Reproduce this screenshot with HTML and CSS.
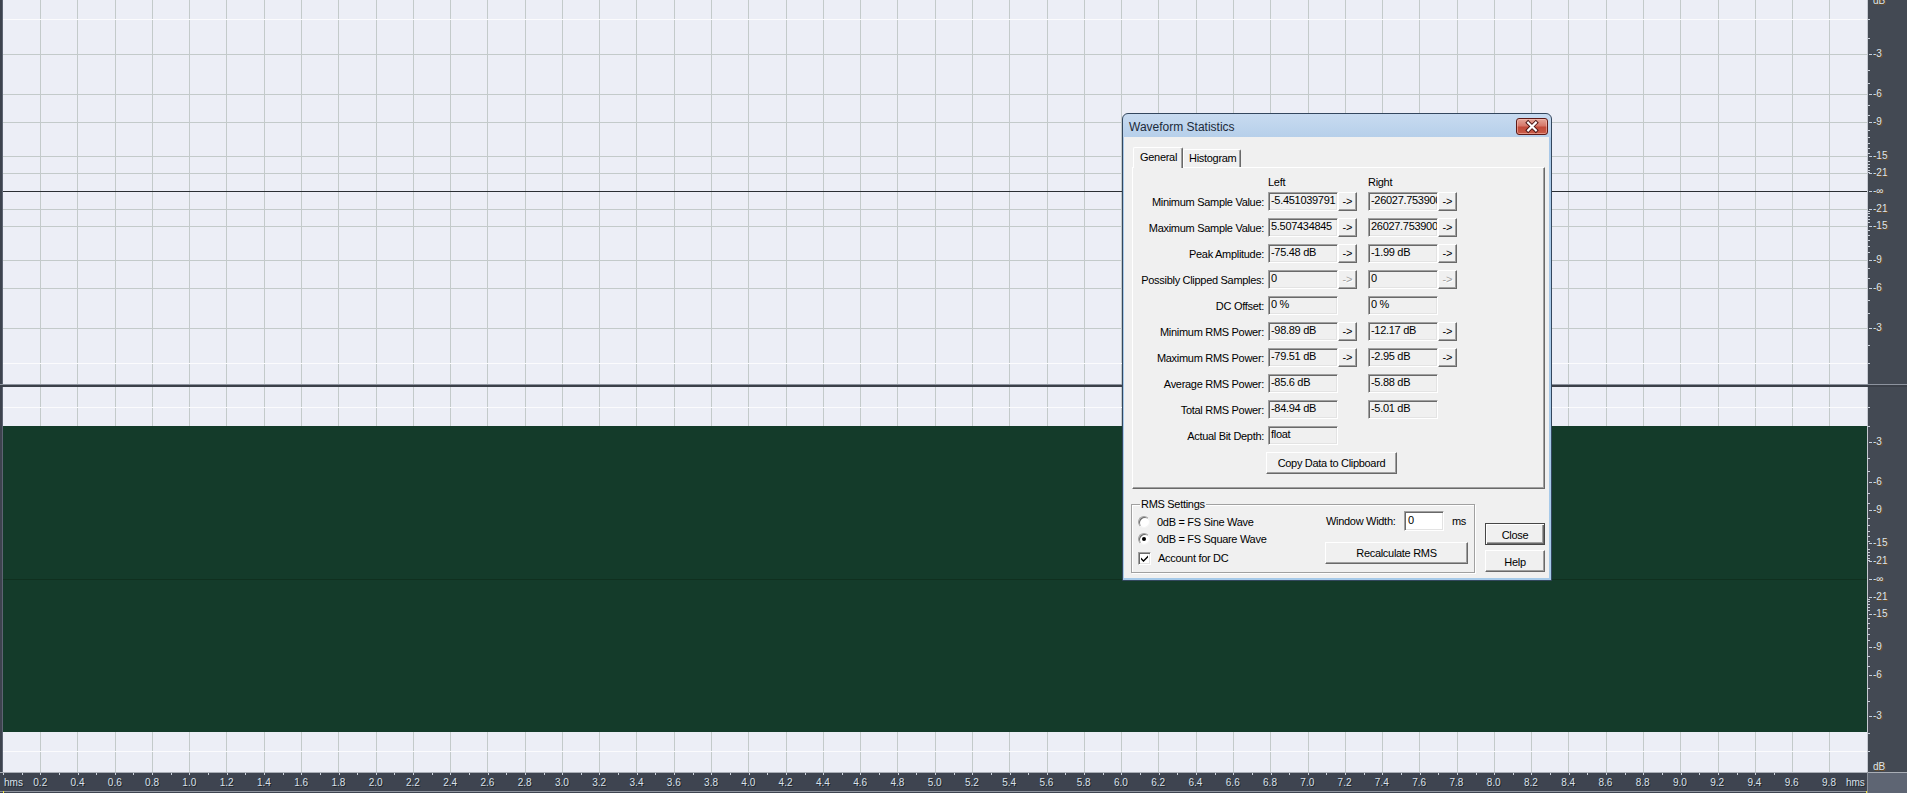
FILE: index.html
```html
<!DOCTYPE html>
<html>
<head>
<meta charset="utf-8">
<title>Waveform Statistics</title>
<link rel="stylesheet" href="styles.css">
</head>
<body>
<div class="app">
  <div class="track t1">
    <div class="strip"></div>
    <div class="canvas">
      <svg class="grid" width="1864" height="384" shape-rendering="crispEdges">
        <path class="gl" d="M37.5 0V384m37.28 -384v384m37.28 -384v384m37.28 -384v384m37.28 -384v384m37.28 -384v384m37.28 -384v384m37.28 -384v384m37.28 -384v384m37.28 -384v384m37.28 -384v384m37.28 -384v384m37.28 -384v384m37.28 -384v384m37.28 -384v384m37.28 -384v384m37.28 -384v384m37.28 -384v384m37.28 -384v384m37.28 -384v384m37.28 -384v384m37.28 -384v384m37.28 -384v384m37.28 -384v384m37.28 -384v384m37.28 -384v384m37.28 -384v384m37.28 -384v384m37.28 -384v384m37.28 -384v384m37.28 -384v384m37.28 -384v384m37.28 -384v384m37.28 -384v384m37.28 -384v384m37.28 -384v384m37.28 -384v384m37.28 -384v384m37.28 -384v384m37.28 -384v384m37.28 -384v384m37.28 -384v384m37.28 -384v384m37.28 -384v384m37.28 -384v384m37.28 -384v384m37.28 -384v384m37.28 -384v384m37.28 -384v384"/>
        <path class="gl" d="M0 54.5H1864M0 94.5H1864M0 122.5H1864M0 156.5H1864M0 173.5H1864M0 209.5H1864M0 226.5H1864M0 260.5H1864M0 288.5H1864M0 328.5H1864"/>
        <path class="wl" d="M0 19.5H1864M0 363.5H1864"/>
        <path class="cl" d="M0 191.5H1864"/>
      </svg>
    </div>
    <div class="vsep"></div>
    <div class="ruler">
      <svg class="ticks" width="39" height="384" shape-rendering="crispEdges">
        <path d="M0 19.5h2M0 38.5h2M0 70.5h2M0 83.5h2M0 105.5h2M0 115.5h2M0 130.5h2M0 137.5h2M0 143.5h2M0 148.5h2M0 153.5h2M0 161.5h2M0 164.5h2M0 167.5h2M0 170.5h2M0 172.5h2M0 363.5h2M0 345.5h2M0 313.5h2M0 300.5h2M0 278.5h2M0 268.5h2M0 252.5h2M0 246.5h2M0 240.5h2M0 235.5h2M0 230.5h2M0 222.5h2M0 219.5h2M0 216.5h2M0 213.5h2M0 211.5h2"/>
        <path d="M1 54.5h3M1 94.5h3M1 122.5h3M1 156.5h3M1 173.5h3M1 191.5h3M1 209.5h3M1 226.5h3M1 260.5h3M1 288.5h3M1 328.5h3"/>
      </svg>
      <span class="rl" style="top:-4px">dB</span>
      <span class="rl" style="top:49px">-3</span>
      <span class="rl" style="top:89px">-6</span>
      <span class="rl" style="top:117px">-9</span>
      <span class="rl" style="top:151px">-15</span>
      <span class="rl" style="top:168px">-21</span>
      <span class="rl" style="top:186px">-∞</span>
      <span class="rl" style="top:204px">-21</span>
      <span class="rl" style="top:221px">-15</span>
      <span class="rl" style="top:255px">-9</span>
      <span class="rl" style="top:283px">-6</span>
      <span class="rl" style="top:323px">-3</span>
    </div>
  </div>

  <div class="tsep"></div>

  <div class="track t2">
    <div class="strip"></div>
    <div class="canvas">
      <svg class="grid" width="1864" height="385" shape-rendering="crispEdges">
        <path class="gl" d="M37.5 0V385m37.28 -385v385m37.28 -385v385m37.28 -385v385m37.28 -385v385m37.28 -385v385m37.28 -385v385m37.28 -385v385m37.28 -385v385m37.28 -385v385m37.28 -385v385m37.28 -385v385m37.28 -385v385m37.28 -385v385m37.28 -385v385m37.28 -385v385m37.28 -385v385m37.28 -385v385m37.28 -385v385m37.28 -385v385m37.28 -385v385m37.28 -385v385m37.28 -385v385m37.28 -385v385m37.28 -385v385m37.28 -385v385m37.28 -385v385m37.28 -385v385m37.28 -385v385m37.28 -385v385m37.28 -385v385m37.28 -385v385m37.28 -385v385m37.28 -385v385m37.28 -385v385m37.28 -385v385m37.28 -385v385m37.28 -385v385m37.28 -385v385m37.28 -385v385m37.28 -385v385m37.28 -385v385m37.28 -385v385m37.28 -385v385m37.28 -385v385m37.28 -385v385m37.28 -385v385m37.28 -385v385m37.28 -385v385"/>
        <path class="wl" d="M0 20.5H1864M0 364.5H1864"/>
        <rect class="wave" x="0" y="39" width="1864" height="306"/>
        <path class="wc" d="M0 192.5H1864"/>
      </svg>
    </div>
    <div class="vsep"></div>
    <div class="ruler">
      <svg class="ticks" width="39" height="385" shape-rendering="crispEdges">
        <g transform="translate(0 1)">
          <path d="M0 19.5h2M0 38.5h2M0 70.5h2M0 83.5h2M0 105.5h2M0 115.5h2M0 130.5h2M0 137.5h2M0 143.5h2M0 148.5h2M0 153.5h2M0 161.5h2M0 164.5h2M0 167.5h2M0 170.5h2M0 172.5h2M0 363.5h2M0 345.5h2M0 313.5h2M0 300.5h2M0 278.5h2M0 268.5h2M0 252.5h2M0 246.5h2M0 240.5h2M0 235.5h2M0 230.5h2M0 222.5h2M0 219.5h2M0 216.5h2M0 213.5h2M0 211.5h2"/>
          <path d="M1 54.5h3M1 94.5h3M1 122.5h3M1 155.5h3M1 173.5h3M1 191.5h3M1 209.5h3M1 226.5h3M1 259.5h3M1 287.5h3M1 328.5h3"/>
        </g>
      </svg>
      <span class="rl" style="top:50px">-3</span>
      <span class="rl" style="top:90px">-6</span>
      <span class="rl" style="top:118px">-9</span>
      <span class="rl" style="top:151px">-15</span>
      <span class="rl" style="top:169px">-21</span>
      <span class="rl" style="top:187px">-∞</span>
      <span class="rl" style="top:205px">-21</span>
      <span class="rl" style="top:222px">-15</span>
      <span class="rl" style="top:255px">-9</span>
      <span class="rl" style="top:283px">-6</span>
      <span class="rl" style="top:324px">-3</span>
      <span class="rl" style="top:375px">dB</span>
    </div>
  </div>

  <div class="timebar">
    <div class="timeline">
      <svg class="tticks" width="1867" height="3" shape-rendering="crispEdges">
        <path d="M3.5 0v2m18.64 -2v2m18.64 -2v2m18.64 -2v2m18.64 -2v2m18.64 -2v2m18.64 -2v2m18.64 -2v2m18.64 -2v2m18.64 -2v2m18.64 -2v2m18.64 -2v2m18.64 -2v2m18.64 -2v2m18.64 -2v2m18.64 -2v2m18.64 -2v2m18.64 -2v2m18.64 -2v2m18.64 -2v2m18.64 -2v2m18.64 -2v2m18.64 -2v2m18.64 -2v2m18.64 -2v2m18.64 -2v2m18.64 -2v2m18.64 -2v2m18.64 -2v2m18.64 -2v2m18.64 -2v2m18.64 -2v2m18.64 -2v2m18.64 -2v2m18.64 -2v2m18.64 -2v2m18.64 -2v2m18.64 -2v2m18.64 -2v2m18.64 -2v2m18.64 -2v2m18.64 -2v2m18.64 -2v2m18.64 -2v2m18.64 -2v2m18.64 -2v2m18.64 -2v2m18.64 -2v2m18.64 -2v2m18.64 -2v2m18.64 -2v2m18.64 -2v2m18.64 -2v2m18.64 -2v2m18.64 -2v2m18.64 -2v2m18.64 -2v2m18.64 -2v2m18.64 -2v2m18.64 -2v2m18.64 -2v2m18.64 -2v2m18.64 -2v2m18.64 -2v2m18.64 -2v2m18.64 -2v2m18.64 -2v2m18.64 -2v2m18.64 -2v2m18.64 -2v2m18.64 -2v2m18.64 -2v2m18.64 -2v2m18.64 -2v2m18.64 -2v2m18.64 -2v2m18.64 -2v2m18.64 -2v2m18.64 -2v2m18.64 -2v2m18.64 -2v2m18.64 -2v2m18.64 -2v2m18.64 -2v2m18.64 -2v2m18.64 -2v2m18.64 -2v2m18.64 -2v2m18.64 -2v2m18.64 -2v2m18.64 -2v2m18.64 -2v2m18.64 -2v2m18.64 -2v2m18.64 -2v2m18.64 -2v2"/>
      </svg>
      <div class="tlabels">
        <span class="hms">hms</span>
        <span class="tl">0.2</span><span class="tl">0.4</span><span class="tl">0.6</span><span class="tl">0.8</span><span class="tl">1.0</span>
        <span class="tl">1.2</span><span class="tl">1.4</span><span class="tl">1.6</span><span class="tl">1.8</span><span class="tl">2.0</span>
        <span class="tl">2.2</span><span class="tl">2.4</span><span class="tl">2.6</span><span class="tl">2.8</span><span class="tl">3.0</span>
        <span class="tl">3.2</span><span class="tl">3.4</span><span class="tl">3.6</span><span class="tl">3.8</span><span class="tl">4.0</span>
        <span class="tl">4.2</span><span class="tl">4.4</span><span class="tl">4.6</span><span class="tl">4.8</span><span class="tl">5.0</span>
        <span class="tl">5.2</span><span class="tl">5.4</span><span class="tl">5.6</span><span class="tl">5.8</span><span class="tl">6.0</span>
        <span class="tl">6.2</span><span class="tl">6.4</span><span class="tl">6.6</span><span class="tl">6.8</span><span class="tl">7.0</span>
        <span class="tl">7.2</span><span class="tl">7.4</span><span class="tl">7.6</span><span class="tl">7.8</span><span class="tl">8.0</span>
        <span class="tl">8.2</span><span class="tl">8.4</span><span class="tl">8.6</span><span class="tl">8.8</span><span class="tl">9.0</span>
        <span class="tl">9.2</span><span class="tl">9.4</span><span class="tl">9.6</span><span class="tl">9.8</span>
        <span class="hms hms-r">hms</span>
      </div>
      <span class="mark mark-l"></span>
      <span class="mark mark-r"></span>
    </div>
    <div class="corner"></div>
  </div>
</div>

<div class="dialog">
  <div class="titlebar">
    <span class="title">Waveform Statistics</span>
    <span class="xbtn">
      <svg width="31" height="17" viewBox="0 0 31 17">
        <path d="M11.5 4.5L19.5 12.5M19.5 4.5L11.5 12.5" stroke="#4a1414" stroke-width="4.2" stroke-linecap="square" fill="none"/>
        <path d="M11.5 4.5L19.5 12.5M19.5 4.5L11.5 12.5" stroke="#ffffff" stroke-width="2.2" stroke-linecap="square" fill="none"/>
      </svg>
    </span>
  </div>
  <div class="client">
    <div class="tabs">
      <div class="tab active">General</div>
      <div class="tab">Histogram</div>
    </div>
    <div class="panel">
      <div class="colheads">
        <span class="ch ch-l">Left</span>
        <span class="ch">Right</span>
      </div>
      <div class="row">
        <span class="lbl">Minimum Sample Value:</span>
        <span class="cell cl-l"><span class="field">-5.451039791</span><span class="arr">-&gt;</span></span>
        <span class="cell"><span class="field">-26027.753900</span><span class="arr">-&gt;</span></span>
      </div>
      <div class="row">
        <span class="lbl">Maximum Sample Value:</span>
        <span class="cell cl-l"><span class="field">5.507434845</span><span class="arr">-&gt;</span></span>
        <span class="cell"><span class="field">26027.753900</span><span class="arr">-&gt;</span></span>
      </div>
      <div class="row">
        <span class="lbl">Peak Amplitude:</span>
        <span class="cell cl-l"><span class="field">-75.48 dB</span><span class="arr">-&gt;</span></span>
        <span class="cell"><span class="field">-1.99 dB</span><span class="arr">-&gt;</span></span>
      </div>
      <div class="row">
        <span class="lbl">Possibly Clipped Samples:</span>
        <span class="cell cl-l"><span class="field">0</span><span class="arr disabled">-&gt;</span></span>
        <span class="cell"><span class="field">0</span><span class="arr disabled">-&gt;</span></span>
      </div>
      <div class="row">
        <span class="lbl">DC Offset:</span>
        <span class="cell cl-l"><span class="field">0 %</span></span>
        <span class="cell"><span class="field">0 %</span></span>
      </div>
      <div class="row">
        <span class="lbl">Minimum RMS Power:</span>
        <span class="cell cl-l"><span class="field">-98.89 dB</span><span class="arr">-&gt;</span></span>
        <span class="cell"><span class="field">-12.17 dB</span><span class="arr">-&gt;</span></span>
      </div>
      <div class="row">
        <span class="lbl">Maximum RMS Power:</span>
        <span class="cell cl-l"><span class="field">-79.51 dB</span><span class="arr">-&gt;</span></span>
        <span class="cell"><span class="field">-2.95 dB</span><span class="arr">-&gt;</span></span>
      </div>
      <div class="row">
        <span class="lbl">Average RMS Power:</span>
        <span class="cell cl-l"><span class="field">-85.6 dB</span></span>
        <span class="cell"><span class="field">-5.88 dB</span></span>
      </div>
      <div class="row">
        <span class="lbl">Total RMS Power:</span>
        <span class="cell cl-l"><span class="field">-84.94 dB</span></span>
        <span class="cell"><span class="field">-5.01 dB</span></span>
      </div>
      <div class="row">
        <span class="lbl">Actual Bit Depth:</span>
        <span class="cell cl-l"><span class="field">float</span></span>
      </div>
      <div class="copyrow">
        <span class="btn copy">Copy Data to Clipboard</span>
      </div>
    </div>
    <div class="lower">
      <fieldset class="group">
        <legend>RMS Settings</legend>
        <div class="gbody">
          <div class="gleft">
            <div class="opt"><span class="radio"></span><span>0dB = FS Sine Wave</span></div>
            <div class="opt"><span class="radio on"></span><span>0dB = FS Square Wave</span></div>
            <div class="opt chkrow"><span class="check"><svg width="9" height="9" viewBox="0 0 9 9"><path d="M1 3.5L3.5 6L8 1.5V3.5L3.5 8L1 5.5Z" fill="#000"/></svg></span><span>Account for DC</span></div>
          </div>
          <div class="gright">
            <div class="wwrow">
              <span class="wwl">Window Width:</span>
              <span class="input">0</span>
              <span class="ms">ms</span>
            </div>
            <span class="btn recalc">Recalculate RMS</span>
          </div>
        </div>
      </fieldset>
      <div class="sidebtns">
        <span class="btn side default">Close</span>
        <span class="btn side">Help</span>
      </div>
    </div>
  </div>
</div>
</body>
</html>
```

FILE: styles.css
```css
* { box-sizing: border-box; }
html, body { margin: 0; padding: 0; }
body {
  width: 1907px;
  height: 793px;
  overflow: hidden;
  position: relative;
  background: #3e4450;
  font-family: "Liberation Sans", Arial, sans-serif;
}
.app {
  display: flex;
  flex-direction: column;
  width: 1907px;
  height: 793px;
}

/* tracks */
.track { display: flex; height: 384px; }
.track.t2 { height: 385px; }
.strip {
  width: 3px;
  background: linear-gradient(to right, #3d434e 0 2px, #5d6472 2px);
}
.canvas { width: 1864px; background: #eceef6; overflow: hidden; }
.grid { display: block; }
.gl { stroke: #c3caca; stroke-width: 1; fill: none; }
.wl { stroke: #fbfbfd; stroke-width: 1; fill: none; }
.cl { stroke: #2b2f34; stroke-width: 1; fill: none; }
.wave { fill: #143b2a; }
.wc { stroke: #10301f; stroke-width: 1; fill: none; }
.vsep { width: 1px; background: #c6cad2; }
.ruler {
  width: 39px;
  background: #434953;
  position: relative;
  overflow: hidden;
}
.ticks { position: absolute; left: 0; top: 0; }
.ticks path { stroke: #c9cfd9; stroke-width: 1; fill: none; }
.rl {
  position: absolute;
  left: 5px;
  font-size: 10px;
  line-height: 10px;
  color: #dde4ee;
  text-shadow: 1px 1px 0 #6a4d26;
  white-space: nowrap;
}
.tsep {
  height: 3px;
  background: linear-gradient(to bottom, #8d939e 0 1px, #3b4049 1px);
}

/* time ruler */
.timebar { display: flex; height: 21px; }
.timeline {
  width: 1867px;
  position: relative;
  background: linear-gradient(to bottom, #a9aeb6 0 1px, #3e4450 1px calc(100% - 2px), #8e949e calc(100% - 2px) calc(100% - 1px), #3e4450 calc(100% - 1px));
}
.tticks { position: absolute; left: 0; top: 1px; }
.tticks path { stroke: #c9cfd9; stroke-width: 1; fill: none; }
.tlabels {
  display: flex;
  padding-left: 4px;
  padding-top: 5px;
  font-size: 10px;
  line-height: 12px;
  color: #d9e0ea;
  text-shadow: 1px 1px 0 #20242a;
  white-space: nowrap;
}
.hms { width: 17.64px; flex: 0 0 17.64px; }
.hms-r { margin-left: -1.7px; }
.tl { flex: 0 0 37.28px; width: 37.28px; text-align: center; }
.mark {
  position: absolute;
  bottom: 0;
  width: 1px;
  height: 2px;
  background: #f2e23a;
}
.mark-l { left: 3px; }
.mark-r { left: 1866px; }
.corner {
  width: 40px;
  background: linear-gradient(to bottom, #a9aeb6 0 1px, #5e6573 1px);
  border-left: 1px solid #8a909a;
}

/* dialog */
.dialog {
  position: absolute;
  left: 1122px;
  top: 113px;
  width: 430px;
  height: 468px;
  border: 1px solid #33475e;
  border-radius: 6px 6px 0 0;
  padding: 0 2px 2px 1px;
  background: linear-gradient(to bottom, #c8dbf0 0, #b6cfea 23px, #a8c8e8 24px, #a6cae9 100%);
  display: flex;
  flex-direction: column;
  font-family: "Liberation Sans", Arial, sans-serif;
  font-size: 11px;
  color: #000;
  letter-spacing: -0.3px;
}
.titlebar {
  height: 23px;
  display: flex;
  align-items: flex-start;
  justify-content: space-between;
  padding-left: 5px;
}
.title {
  font-size: 12px;
  line-height: 14px;
  padding-top: 6px;
  color: #1c2a3a;
  letter-spacing: 0;
}
.xbtn {
  margin-top: 4px;
  margin-right: 1px;
  width: 32px;
  height: 17px;
  border: 1px solid #5e1a16;
  border-radius: 3px;
  background: linear-gradient(to bottom, #e4a699 0%, #d6786a 45%, #c24a3a 55%, #c85c48 100%);
  box-shadow: inset 0 0 0 1px rgba(255,200,190,0.5);
  display: flex;
  align-items: center;
  justify-content: center;
}
.xbtn svg { display: block; }
.client {
  height: 441px;
  background: #f0f0f0;
  padding: 10px 4px 0 8px;
}

/* tabs */
.tabs {
  display: flex;
  align-items: flex-end;
  height: 20px;
  padding-left: 1px;
  position: relative;
  z-index: 1;
}
.tab {
  height: 18px;
  padding: 2px 0 0 5px;
  border-left: 1px solid #fff;
  border-top: 1px solid #fff;
  border-right: 1px solid #696969;
  box-shadow: inset -1px 0 0 #a0a0a0;
  border-radius: 2px 2px 0 0;
  background: #f0f0f0;
  line-height: 13px;
  width: 58px;
}
.tab.active {
  height: 21px;
  margin-bottom: -1px;
  width: 50px;
  padding: 3px 0 0 6px;
  line-height: 13px;
}
.panel {
  width: 413px;
  height: 322px;
  border: 1px solid;
  border-color: #fff #696969 #696969 #fff;
  box-shadow: inset -1px -1px 0 #a0a0a0;
  padding-top: 8px;
}
.colheads {
  display: flex;
  height: 12px;
  line-height: 12px;
  margin-bottom: 4px;
  padding-left: 135px;
}
.ch-l { width: 100px; }
.row {
  display: flex;
  height: 19px;
  margin-bottom: 7px;
}
.lbl {
  width: 131px;
  margin-right: 4px;
  text-align: right;
  white-space: nowrap;
  padding-top: 2px;
  line-height: 17px;
}
.cell { display: flex; width: 89px; }
.cell.cl-l { width: 100px; }
.field {
  width: 70px;
  height: 19px;
  border: 1px solid;
  border-color: #a0a0a0 #fff #fff #a0a0a0;
  box-shadow: inset 1px 1px 0 #696969, inset -1px -1px 0 #e3e3e3;
  padding-left: 2px;
  line-height: 15px;
  white-space: nowrap;
  overflow: hidden;
  background: #f0f0f0;
}
.arr {
  width: 19px;
  height: 19px;
  border: 1px solid;
  border-color: #fff #696969 #696969 #fff;
  box-shadow: inset -1px -1px 0 #a0a0a0;
  text-align: center;
  line-height: 16px;
  letter-spacing: 0;
}
.arr.disabled { color: #a0a0a0; text-shadow: 1px 1px 0 #fff; }
.copyrow { padding-left: 133px; margin-top: 4px; }
.btn {
  display: flex;
  align-items: center;
  justify-content: center;
  border: 1px solid;
  border-color: #fff #696969 #696969 #fff;
  box-shadow: inset -1px -1px 0 #a0a0a0;
  background: #f0f0f0;
  white-space: nowrap;
}
.btn.copy { width: 131px; height: 22px; padding-bottom: 1px; }

/* lower */
.lower {
  display: flex;
  align-items: flex-start;
  margin-top: 9px;
  margin-left: -1px;
}
.group {
  margin: 0;
  padding: 0 5px 4px 6px;
  width: 344px;
  height: 75px;
  border: 1px solid #a0a0a0;
  box-shadow: inset 1px 1px 0 #fff, 1px 1px 0 #fff;
  min-width: 0;
}
.group legend {
  padding: 0 1px;
  margin-left: 2px;
  line-height: 12px;
  background: #f0f0f0;
}
.gbody { display: flex; }
.gleft { width: 187px; padding-top: 3px; }
.opt {
  display: flex;
  align-items: center;
  height: 17px;
  gap: 7px;
  white-space: nowrap;
}
.opt.chkrow { height: 20px; margin-top: 1px; gap: 7px; }
.radio {
  width: 12px;
  height: 12px;
  border-radius: 50%;
  background: #fff;
  border: 1px solid;
  border-color: #a0a0a0 #f4f4f4 #f4f4f4 #a0a0a0;
  box-shadow: inset 1px 1px 0 #696969;
  position: relative;
  flex: none;
}
.radio.on::after {
  content: "";
  position: absolute;
  left: 3px;
  top: 3px;
  width: 4px;
  height: 4px;
  border-radius: 50%;
  background: #000;
}
.check {
  width: 13px;
  height: 13px;
  background: #fff;
  border: 1px solid;
  border-color: #a0a0a0 #fff #fff #a0a0a0;
  box-shadow: inset 1px 1px 0 #696969, inset -1px -1px 0 #e3e3e3;
  display: flex;
  align-items: center;
  justify-content: center;
  flex: none;
}
.check svg { display: block; }
.gright { padding-top: 1px; }
.wwrow {
  display: flex;
  align-items: center;
  height: 20px;
  padding-left: 1px;
  margin-bottom: 11px;
}
.wwl { width: 78px; white-space: nowrap; }
.input {
  width: 40px;
  height: 20px;
  background: #fff;
  border: 1px solid;
  border-color: #a0a0a0 #fff #fff #a0a0a0;
  box-shadow: inset 1px 1px 0 #696969, inset -1px -1px 0 #e3e3e3;
  padding-left: 3px;
  line-height: 17px;
}
.ms { margin-left: 8px; }
.btn.recalc { width: 143px; height: 22px; }
.sidebtns {
  display: flex;
  flex-direction: column;
  gap: 5px;
  margin-left: 10px;
  margin-top: 25px;
}
.btn.side { width: 60px; height: 22px; padding-top: 1px; }
.btn.default {
  border: 1px solid #464646;
  box-shadow: inset 1px 1px 0 #fff, inset -1px -1px 0 #696969, inset -2px -2px 0 #a0a0a0;
}
```
